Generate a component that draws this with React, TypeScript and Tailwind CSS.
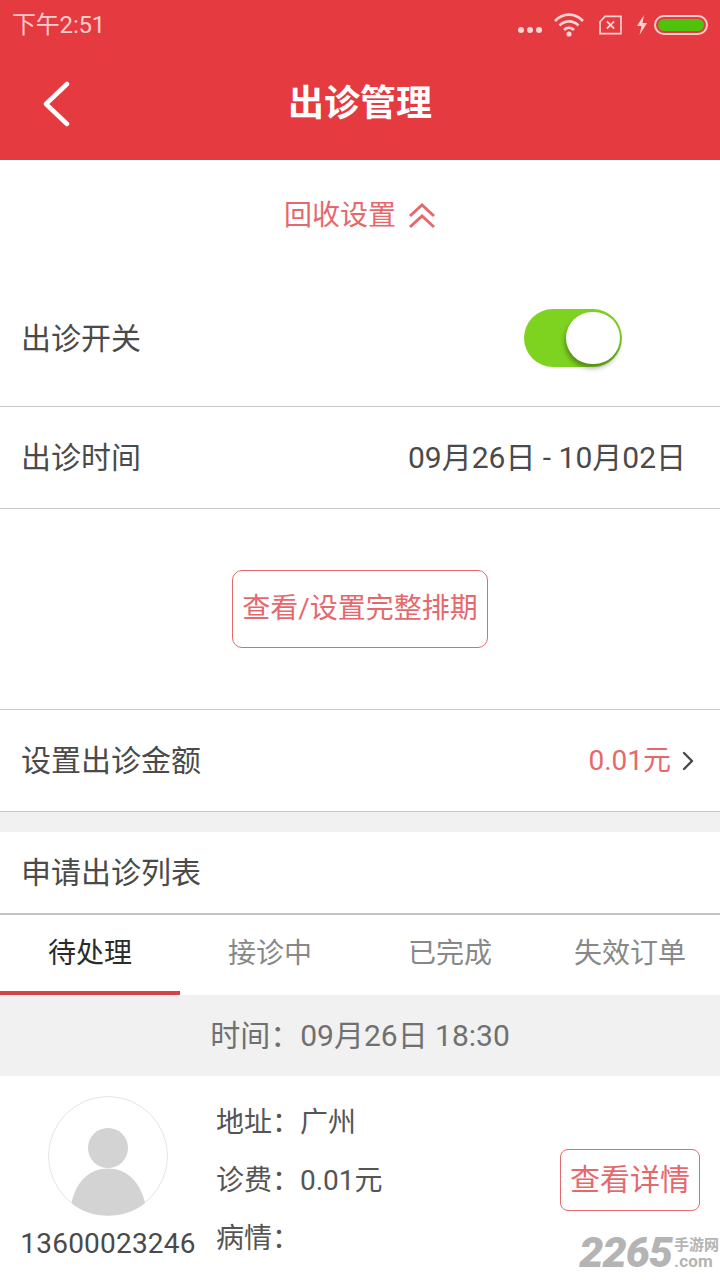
import { ChevronRight } from "lucide-react";

const FONT = "font-['Roboto','Noto_Sans_CJK_SC',sans-serif]";

function StatusBar() {
  return (
    <div className="flex h-[50px] items-center justify-between pl-3 pr-[12px] pb-[1px]">
      <span className="text-[24px] leading-none tracking-[-0.2px] text-[#f9cfd0]">下午2:51</span>
      <div className="flex items-center">
        <svg viewBox="0 0 26 8" className="mt-[10px] mr-[10px] h-[8px] w-[26px]" fill="#f9d5d6" aria-hidden>
          <circle cx="4" cy="4" r="3" />
          <circle cx="13" cy="4" r="3" />
          <circle cx="22" cy="4" r="3" />
        </svg>
        <svg viewBox="0 0 32 24" className="mr-[13px] h-[24px] w-[32px]" fill="none" stroke="#f9d5d6" strokeWidth="2.6" aria-hidden>
          <path d="M2 8C10-0.5 22-0.5 30 8" />
          <path d="M6.500 12.500C12 7 20 7 25.500 12.500" />
          <path d="M11 17C14 14.200 18 14.200 21 17" />
          <circle cx="16" cy="21" r="2.600" fill="#f9d5d6" stroke="none" />
        </svg>
        <svg viewBox="0 0 26 22" className="mr-[13px] h-[20px] w-[25px]" fill="none" stroke="#f9d5d6" strokeWidth="1.800" aria-hidden>
          <path d="M7 1.500H24.500V20.500H1.500V7.500Z" />
          <path d="M9 7L17 15M17 7L9 15" strokeWidth="2" />
        </svg>
        <svg viewBox="0 0 12 20" className="mr-[6px] h-[20px] w-[12px]" fill="#f9d5d6" aria-hidden>
          <path d="M8 0L1 11H5.500L3.500 20L11 8H6.500Z" />
        </svg>
        <div className="flex h-[20px] w-[54px] items-center rounded-full border-2 border-[#f9cfd0] p-[2px]">
          <div className="h-full w-full rounded-full bg-[#4fc20b]" />
        </div>
      </div>
    </div>
  );
}

function Row({ label, right, className }: { label: string; right?: React.ReactNode; className: string }) {
  return (
    <div className={`flex items-center justify-between border-b border-[#c9c9c9] bg-white pl-[21px] ${className}`}>
      <span className="text-[30px] leading-none text-[#4a4a4a]">{label}</span>
      {right}
    </div>
  );
}

function InfoLine({ label, value }: { label: string; value?: string }) {
  return (
    <div className="flex h-[58px] items-center text-[28px] leading-none text-[#555555]">
      <span className="w-[84px]">{label}</span>
      {value ? <span>{value}</span> : null}
    </div>
  );
}

function Watermark() {
  return (
    <div className="absolute bottom-[10px] right-0 flex items-end text-[#b4b4b4]">
      <span className="text-[43px] leading-[36px] font-black italic tracking-[-1px] font-['Roboto',sans-serif]">2265</span>
      <span className="ml-[2px] flex w-[46px] flex-col items-start font-bold leading-none">
        <span className="text-[15px] tracking-[0px]">手游网</span>
        <span className="text-[17px] tracking-[0.2px]">.com</span>
      </span>
    </div>
  );
}

export default function App() {
  const tabs = ["待处理", "接诊中", "已完成", "失效订单"];

  return (
    <div className={`relative h-[1280px] w-[720px] overflow-hidden bg-white ${FONT}`}>
      <div className="bg-[#e53a3f]">
        <StatusBar />
        <div className="relative flex h-[110px] items-center justify-center pb-[2px]">
          <svg viewBox="0 0 28 46" className="absolute left-[42px] top-[31px] h-[46px] w-[28px]" fill="none" stroke="#ffffff" strokeWidth="4.500" strokeLinecap="round" strokeLinejoin="round" aria-hidden>
            <path d="M25 3L4 23L25 43" />
          </svg>
          <h1 className="text-[36px] leading-none font-bold text-white">出诊管理</h1>
        </div>
      </div>

      <div className="flex h-[112px] items-center justify-center gap-[12px] pb-[0px]">
        <span className="text-[28px] leading-none text-[#e5696c]">回收设置</span>
        <svg viewBox="0 0 28 26" className="h-[26px] w-[28px]" fill="none" stroke="#e5696c" strokeWidth="3" aria-hidden>
          <path d="M2 13L14 2L26 13" />
          <path d="M2 24L14 13L26 24" />
        </svg>
      </div>

      <Row
        label="出诊开关"
        className="h-[135px] pr-[98px]"
        right={
          <div className="relative mb-[2px] h-[58px] w-[98px] rounded-full bg-[#7ed321]">
            <div className="absolute right-[2px] top-[3px] h-[52px] w-[54px] rounded-full bg-white shadow-[-1px_4px_5px_rgba(0,0,0,0.35)]" />
          </div>
        }
      />
      <Row
        label="出诊时间"
        className="h-[102px] pr-[34px]"
        right={<span className="text-[30px] leading-none text-[#4a4a4a]">09月26日 - 10月02日</span>}
      />

      <div className="flex h-[201px] items-center justify-center border-b border-[#c9c9c9] pb-[1px]">
        <button type="button" className="flex h-[78px] w-[256px] items-center justify-center rounded-[10px] border border-[#e5696c] text-[28px] leading-none text-[#e5696c]">
          查看/设置完整排期
        </button>
      </div>

      <Row
        label="设置出诊金额"
        className="h-[102px] pr-[16px]"
        right={
          <div className="flex items-center">
            <span className="text-[28px] leading-none text-[#e5696c]">0.01元</span>
            <ChevronRight className="ml-[1px] h-[32px] w-[32px] text-[#4a4a4a]" strokeWidth={1.800} />
          </div>
        }
      />

      <div className="h-[20px] bg-[#f1f1f1]" />

      <Row label="申请出诊列表" className="h-[83px] border-b-2 border-b-[#c2c2c2]" />

      <div className="grid h-[80px] grid-cols-4">
        {tabs.map((tab, i) => (
          <div
            key={tab}
            className={
              i === 0
                ? "flex items-center justify-center border-b-4 border-[#d4434a] pt-[2px] text-[28px] leading-none text-[#2b2b2b]"
                : "flex items-center justify-center pb-[2px] text-[28px] leading-none text-[#888888]"
            }
          >
            {tab}
          </div>
        ))}
      </div>

      <div className="flex h-[81px] items-center justify-center bg-[#f1f1f1] text-[30px] leading-none text-[#707070]">
        时间：09月26日 18:30
      </div>

      <div className="flex pt-[20px]">
        <div className="flex w-[216px] shrink-0 flex-col items-center">
          <svg viewBox="0 0 120 120" className="h-[120px] w-[120px]" aria-hidden>
            <circle cx="60" cy="60" r="59.500" fill="#ffffff" stroke="#e4e4e4" strokeWidth="1" />
            <circle cx="60" cy="52" r="20" fill="#d3d3d3" />
            <path d="M23.500 107C28 85 42 72.500 60 72.500C78 72.500 92 85 97 107C88 115 74 119.500 60 119.500C46 119.500 32 115 23.500 107Z" fill="#d3d3d3" />
          </svg>
          <span className="mt-[14px] text-[28px] leading-none tracking-[0.2px] text-[#4a4a4a]">13600023246</span>
        </div>
        <div className="-mt-[2px] flex-1">
          <InfoLine label="地址：" value="广州" />
          <InfoLine label="诊费：" value="0.01元" />
          <InfoLine label="病情：" />
        </div>
        <button type="button" className="mt-[53px] mr-[20px] flex h-[62px] w-[140px] items-center justify-center rounded-[8px] border border-[#e5696c] text-[30px] leading-none text-[#e5696c]">
          查看详情
        </button>
      </div>

      <Watermark />
    </div>
  );
}
